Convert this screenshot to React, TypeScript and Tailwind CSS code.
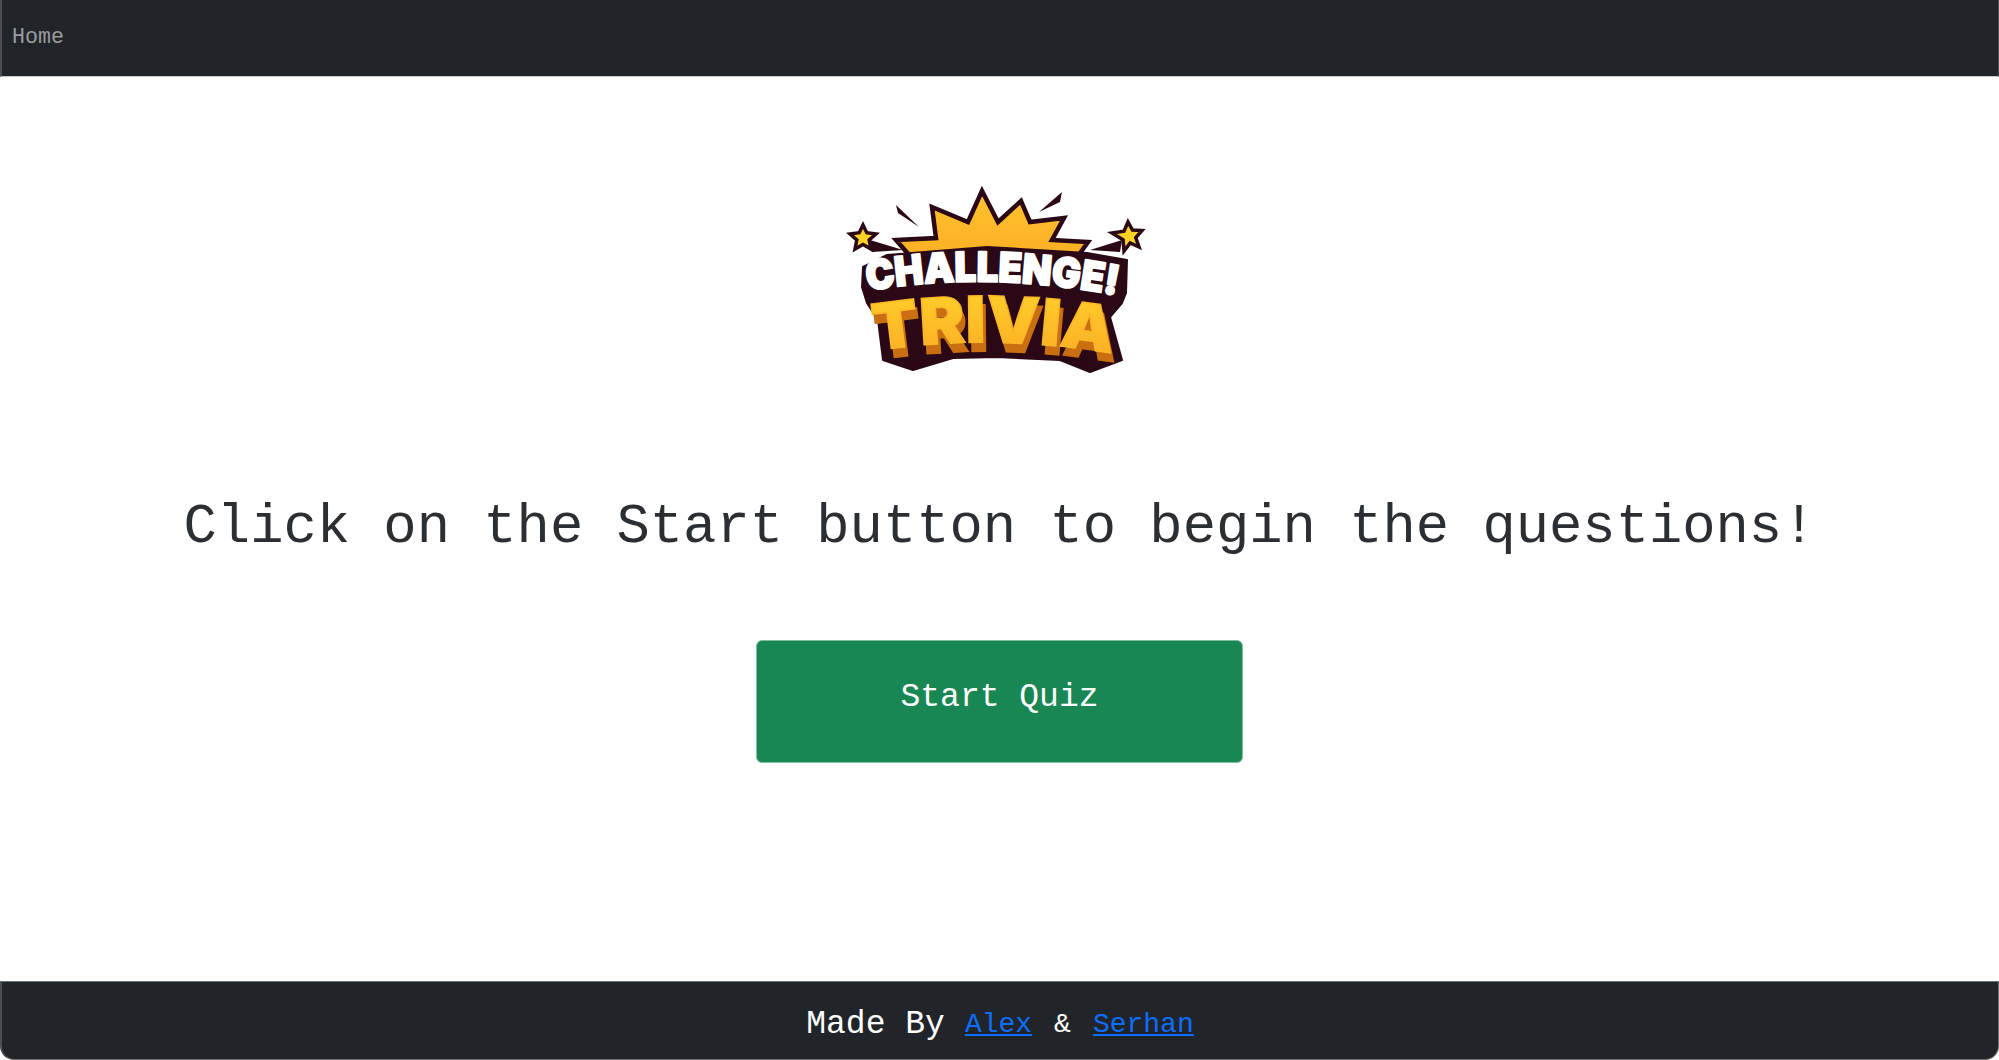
const mono = "font-['Liberation_Mono',monospace]";

const Logo = () => (
  <svg viewBox="0 0 340 230" className="w-[340px] h-[230px]">
    <defs>
      <linearGradient id="crown" x1="0" y1="0" x2="0" y2="1">
        <stop offset="0" stopColor="#ffc22e" />
        <stop offset="1" stopColor="#fbb024" />
      </linearGradient>
      <linearGradient id="face" x1="0" y1="0" x2="0" y2="1">
        <stop offset="0" stopColor="#ffd42a" />
        <stop offset="1" stopColor="#fba925" />
      </linearGradient>
      <path id="arcTop" d="M48 131 Q165 110 300 136" />
      <path id="arcBottom" d="M55 191 Q175 172 300 195" />
    </defs>
    {/* burst */}
    <path
      d="M76 80 L116 78 L112 47 L148 62 L162 31 L178 62 L201 41 L210 62 L244 58 L232 80 L268 82 L258 96 L90 96 Z"
      fill="url(#crown)"
      stroke="#2a0815"
      strokeWidth="4.5"
      strokeMiterlimit="8"
    />
    {/* sparks */}
    <path d="M76 45 L99 67 L78 53 Z" fill="#2a0815" />
    <path d="M242 32 L219 52 L240 42 Z" fill="#2a0815" />
    <path d="M50 80 L83 90 L52 92 Z" fill="#2a0815" />
    <path d="M270 90 L302 80 L300 92 Z" fill="#2a0815" />
    {/* stars */}
    <path
      d="M43 65 L46.8 72.7 L56 74 L49.2 80 L51 89 L43 84.5 L35 89 L36.8 80 L30 74 L39.2 72.7 Z"
      fill="#fdd224"
      stroke="#2a0815"
      strokeWidth="3.5"
      strokeMiterlimit="8"
    />
    <path
      d="M308 62 L312.5 70 L322 70.5 L315.8 77.6 L319 87 L310.2 82.9 L304 91 L303.1 79.7 L292 73 L304 71.2 Z"
      fill="#fdd224"
      stroke="#2a0815"
      strokeWidth="3.5"
      strokeMiterlimit="8"
    />
    {/* backing */}
    <path
      d="M43 107 L67 95 L167 87 L267 93 L307 100 L306 133 L302 143 L290 157 L302 200 L270 212 L240 200 L177 197 L133 198 L93 210 L63 200 L58 160 L47 143 L42 127 Z"
      fill="#2a0815"
      stroke="#2a0815"
      strokeWidth="2"
      strokeLinejoin="round"
    />
    {/* CHALLENGE row */}
    <text
      fontFamily="Inter, 'Liberation Sans', sans-serif"
      fontWeight="900"
      fontSize="41"
      fill="#ffffff"
      stroke="#ffffff"
      strokeWidth="2"
      strokeLinejoin="round"
    >
      <textPath href="#arcTop" textLength="250" lengthAdjust="spacingAndGlyphs">
        CHALLENGE!
      </textPath>
    </text>
    {/* TRIVIA, the orange under it is a shadow */}
    <text
      className="[filter:drop-shadow(3px_9px_0_#c96f12)]"
      fontFamily="Inter, 'Liberation Sans', sans-serif"
      fontWeight="900"
      fontSize="64"
      fill="url(#face)"
      stroke="#fbb728"
      strokeWidth="1.5"
    >
      <textPath href="#arcBottom" textLength="238" lengthAdjust="spacingAndGlyphs">
        TRIVIA
      </textPath>
    </text>
  </svg>
);

export default function App() {
  return (
    <div className={`${mono} h-[1060px] w-full overflow-hidden bg-white flex flex-col`}>
      <nav className="h-[77px] shrink-0 bg-[#212529] border-l-2 border-r border-[#4b4e52] border-b border-b-[#c9cacb] pl-[10px] pt-[22px]">
        <a className="text-[21.6px] leading-[30px] text-[#9a9c9e]">Home</a>
      </nav>

      <main className="flex-1 flex flex-col items-center">
        <div className="mt-[83px] mr-[19px] h-[230px]">
          <Logo />
        </div>
        <h1 className="mt-[105px] text-[55.5px] leading-[66px] font-normal text-[#2b2f33] whitespace-nowrap">
          Click on the Start button to begin the questions!
        </h1>
        <button className="mt-[79px] w-[487px] h-[123px] rounded-[6px] bg-[#198754] border border-[#7fbfa0] text-white text-[33px] leading-[40px] pb-[8px]">
          Start Quiz
        </button>
      </main>

      <footer className="h-[79px] shrink-0 bg-[#212529] border border-[#6c6f72] border-l-2 border-l-[#4b4e52] rounded-b-[14px] flex items-center justify-center pt-[8px] text-white whitespace-nowrap">
        <span className="text-[33px] leading-[40px]">Made By</span>
        <a href="#" className="ml-[20px] text-[28px] leading-[40px] text-[#0d6efd] underline">
          Alex
        </a>
        <span className="mx-[22px] text-[28px] leading-[40px]">&amp;</span>
        <a href="#" className="text-[28px] leading-[40px] text-[#0d6efd] underline">
          Serhan
        </a>
      </footer>
    </div>
  );
}
